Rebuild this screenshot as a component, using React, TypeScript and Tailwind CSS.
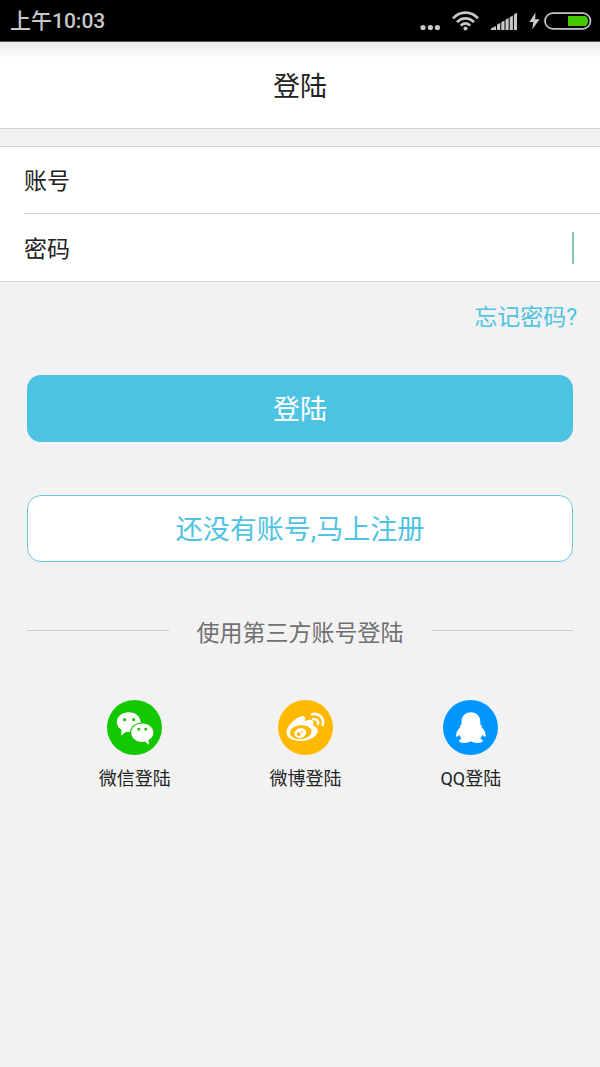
import type { ReactNode } from "react";

const StatusBar = () => {
  return (
    <div className="flex h-[42px] items-center justify-between border-b border-[#555555] bg-black pl-[10px] pr-2 text-[#c8c8c8]">
      <span className="text-[21px] font-medium leading-6">上午10:03</span>
      <div className="flex items-center gap-3">
        <svg width="20" height="20" viewBox="0 0 20 20" fill="currentColor" aria-hidden="true">
          <circle cx="3" cy="16.500" r="2.600" />
          <circle cx="10.400" cy="16.500" r="2.600" />
          <circle cx="17.400" cy="16.500" r="2.600" />
        </svg>
        <svg width="27" height="20" viewBox="0 0 27 20" fill="none" stroke="currentColor" strokeWidth="2.700" aria-hidden="true">
          <path d="M1 7.400C8-.4 19-.4 26 7.400" />
          <path d="M5 11.200c4.800-5.200 12.200-5.200 17 0" />
          <path d="M8.800 14.700c2.700-3 6.700-3 9.400 0" />
          <circle cx="13.500" cy="17.600" r="2" fill="currentColor" stroke="none" />
        </svg>
        <svg width="26" height="18" viewBox="0 0 26 18" fill="currentColor" aria-hidden="true">
          <path d="M0 18v-1.500L5 14v4z" />
          <path d="M6 18v-5.500L9.300 11v7z" />
          <path d="M10.300 18v-7.800l3.200-1.700V18z" />
          <path d="M14.500 18V7.800L17.700 6v12z" />
          <path d="M18.700 18V5.200l3.200-1.800V18z" />
          <path d="M22.900 18V2.400L26 .5V18z" />
        </svg>
        <div className="flex items-center gap-1">
          <svg width="11" height="18" viewBox="0 0 11 18" fill="currentColor" aria-hidden="true">
            <path d="M6.500.5.300 10h4L3.200 17.500 10.600 7.300H6.200z" />
          </svg>
          <svg width="48" height="18" viewBox="0 0 48 18" aria-hidden="true">
            <rect x="1" y="1.200" width="45.500" height="15.600" rx="7.800" fill="none" stroke="currentColor" strokeWidth="1.700" />
            <path d="M24 4h16.500c2.200 0 3.500 2 3.500 5s-1.300 5-3.500 5H24z" fill="#45c800" />
          </svg>
        </div>
      </div>
    </div>
  );
};

const WechatIcon = () => {
  return (
    <svg width="55" height="55" viewBox="0 0 55 55" aria-hidden="true">
      <circle cx="27.500" cy="27.500" r="27.500" fill="#14c800" />
      <path
        d="M21.700 12.200c-6.600 0-11.900 4.300-11.900 9.800 0 3.300 1.900 6.100 4.800 7.900L14 35.800l5-4.100c.9.100 1.800.2 2.700.2 6.600 0 11.900-4.300 11.900-9.900s-5.300-9.800-11.900-9.800z"
        fill="#fff"
      />
      <path
        d="M35.300 23.600c-6.200 0-11.100 4-11.100 9.100s4.900 9.200 11.100 9.200c.9 0 1.800-.1 2.600-.3l4.200 3.500-.7-5c3.100-1.700 5-4.400 5-7.400 0-5.100-4.900-9.100-11.100-9.100z"
        fill="#fff"
        stroke="#14c800"
        strokeWidth="2.400"
        paintOrder="stroke"
      />
      <g fill="#14c800">
        <circle cx="17.600" cy="19.700" r="1.600" />
        <circle cx="26.700" cy="19.700" r="1.600" />
        <circle cx="31.800" cy="29.200" r="1.400" />
        <circle cx="38.800" cy="29.200" r="1.400" />
      </g>
    </svg>
  );
};

const WeiboIcon = () => {
  return (
    <svg width="55" height="55" viewBox="0 0 55 55" aria-hidden="true">
      <circle cx="27.500" cy="27.500" r="27.500" fill="#ffb900" />
      <path
        d="M8.400 32.400c0-3.400 2.500-7.400 6.300-10.900 4.900-4.600 9.900-6.700 11.700-4.900 1 1 .9 2.700.2 4.600 3.600-1.500 6.900-2.100 8.300-.3.800 1.100.7 2.700 0 4.500 2.900.9 4.800 2.700 4.800 5 0 5.300-7.500 10.500-16.500 10.500-8.200 0-14.800-3.300-14.800-8.500z"
        fill="#fff"
      />
      <ellipse cx="22.700" cy="32.200" rx="10.900" ry="7" transform="rotate(-6 22.700 32.200)" fill="#ffb900" />
      <ellipse cx="22.300" cy="33.100" rx="6" ry="4.900" transform="rotate(-18 22.300 33.100)" fill="#fff" />
      <circle cx="20.700" cy="34.200" r="1.900" fill="#ffb900" />
      <circle cx="24" cy="32.200" r=".9" fill="#ffb900" />
      <g fill="none" stroke="#fff" strokeLinecap="round">
        <path d="M34 14.200c6.900-1.500 12.800 4 10.700 10.700" strokeWidth="2.600" />
        <path d="M35 19.200c3.400-.7 5.900 1.700 4.900 4.900" strokeWidth="2.300" />
      </g>
    </svg>
  );
};

const QQIcon = () => {
  return (
    <svg width="55" height="55" viewBox="0 0 55 55" aria-hidden="true">
      <circle cx="27.500" cy="27.500" r="27.500" fill="#0096ff" />
      <path
        d="M27.900 12.300c-5.700 0-9.400 3.900-9.400 9.300v2.600c-1.200 1-1.700 2-1.500 3.300-2.400 2.400-3.900 5.100-3.900 7.700 0 1.600.6 1.900 1.500 1.200.6-.4 1.200-1 1.700-1.600.4 1.400 1.200 2.700 2.300 3.800-1.700.7-2.600 1.500-2.600 2.400 0 1.300 2.400 1.900 5.500 1.900 2.800 0 4.800-.5 5.900-1.400h1c1.100.9 3.100 1.400 5.900 1.400 3.100 0 5.500-.6 5.500-1.900 0-.9-.9-1.700-2.600-2.400 1.100-1.100 1.900-2.400 2.300-3.800.5.600 1.100 1.200 1.700 1.600.9.700 1.500.4 1.500-1.200 0-2.600-1.500-5.300-3.900-7.700.2-1.300-.3-2.300-1.500-3.300v-2.600c0-5.400-3.700-9.300-9.400-9.300z"
        fill="#fff"
      />
    </svg>
  );
};

const SocialLogin = ({ icon, label }: { icon: ReactNode; label: string }) => {
  return (
    <button type="button" className="flex flex-col items-center gap-3 text-[18px] leading-6 text-[#222222]">
      {icon}
      {label}
    </button>
  );
};

const App = () => {
  return (
    <div className="flex min-h-screen flex-col bg-[#f2f2f2] font-[Roboto,'Noto_Sans_CJK_SC',sans-serif]">
      <StatusBar />
      <header className="border-b border-[#d2d2d2] bg-white bg-linear-to-b from-[#ececec] via-white via-20% to-white pb-[22px] pt-[26px]">
        <h1 className="text-center text-[27px] leading-[38px] text-[#222222]">登陆</h1>
      </header>

      <form>
        <div className="mt-[17px] border-y border-[#d2d2d2] bg-white pl-6">
          <div className="flex h-[67px] items-center border-b border-[#d2d2d2] pr-6">
            <label htmlFor="account" className="pt-1 text-[23px] leading-8 text-[#222222]">
              账号
            </label>
            <input
              id="account"
              type="text"
              className="min-w-0 flex-1 bg-transparent text-right text-[23px] leading-8 outline-none"
            />
          </div>
          <div className="flex h-[67px] items-center pr-[26px]">
            <label htmlFor="password" className="pt-1 text-[23px] leading-8 text-[#222222]">
              密码
            </label>
            <input
              id="password"
              type="password"
              className="min-w-0 flex-1 bg-transparent text-right text-[23px] leading-8 outline-none"
            />
            <span className="h-8 w-[2px] bg-[#82c8b9]" />
          </div>
        </div>

        <div className="mt-5 flex justify-end px-[23px]">
          <a href="#forgot" className="text-[23px] leading-8 text-[#4fc3e1]">
            忘记密码?
          </a>
        </div>

        <div className="mt-[41px] flex flex-col gap-[53px] px-[27px]">
          <button type="submit" className="h-[67px] rounded-[14px] bg-[#4dc3e3] pt-1 text-[27px] text-white">
            登陆
          </button>
          <button
            type="button"
            className="h-[67px] rounded-[14px] border border-[#6cc6e0] bg-white pt-1 text-[27px] text-[#4fc3e1]"
          >
            还没有账号,马上注册
          </button>
        </div>
      </form>

      <div className="mt-12 flex items-center gap-7 px-[27px]">
        <div className="h-px flex-1 bg-[#cccccc]" />
        <span className="pt-2 text-[23px] leading-8 text-[#707070]">使用第三方账号登陆</span>
        <div className="h-px flex-1 bg-[#cccccc]" />
      </div>

      <div className="mt-[50px] flex justify-evenly">
        <SocialLogin icon={<WechatIcon />} label="微信登陆" />
        <SocialLogin icon={<WeiboIcon />} label="微博登陆" />
        <SocialLogin icon={<QQIcon />} label="QQ登陆" />
      </div>
    </div>
  );
};

export default App;
